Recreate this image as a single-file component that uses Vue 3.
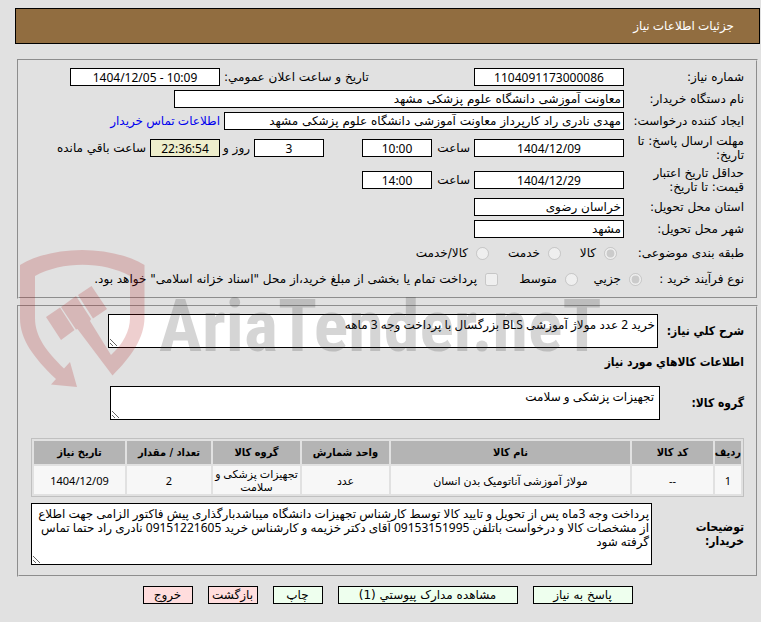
<script setup>
import { ref } from 'vue'

const remarks = ref('پرداخت وجه 3ماه پس از تحویل و تایید کالا توسط کارشناس تجهیزات دانشگاه میباشدبارگذاری پیش فاکتور الزامی جهت اطلاع از مشخصات کالا و درخواست باتلفن 09153151995 آقای دکتر خزیمه و کارشناس خرید 09151221605 نادری راد حتما تماس گرفته شود')
const summary = ref('خرید 2 عدد مولاژ آموزشی BLS بزرگسال با پرداخت وجه 3 ماهه')
const group = ref('تجهیزات پزشکی و سلامت')

const columns = [
  { title: 'ردیف', width: '26px' },
  { title: 'کد کالا', width: '81px' },
  { title: 'نام کالا', width: 'auto' },
  { title: 'واحد شمارش', width: '87px' },
  { title: 'گروه کالا', width: '87px' },
  { title: 'تعداد / مقدار', width: '84px' },
  { title: 'تاریخ نیاز', width: '91px' },
]
const items = [
  ['1', '--', 'مولاژ آموزشی آناتومیک بدن انسان', 'عدد', 'تجهیزات پزشکی و سلامت', '2', '1404/12/09'],
]
const actions = [
  { text: 'پاسخ به نیاز', kind: 'go', size: 'medium' },
  { text: 'مشاهده مدارک پیوستي (1)', kind: 'go', size: 'wide' },
  { text: 'چاپ', kind: 'go', size: 'small' },
  { text: 'بازگشت', kind: 'leave', size: 'small' },
  { text: 'خروج', kind: 'leave', size: 'small' },
]
</script>

<template>
  <main class="page" dir="rtl">
    <header class="title-bar">جزئیات اطلاعات نیاز</header>

    <div class="panels">
      <fieldset class="panel details">
        <div class="row">
          <label class="name" for="need-no">شماره نیاز:</label>
          <input id="need-no" class="box w150 num" value="1104091173000086" readonly>
          <span class="announce">
            <label for="announce">تاریخ و ساعت اعلان عمومي:</label>
            <input id="announce" class="box w150 num" dir="ltr" value="1404/12/05 - 10:09" readonly>
          </span>
        </div>
        <div class="row">
          <label class="name" for="org">نام دستگاه خریدار:</label>
          <input id="org" class="box w450" value="معاونت آموزشی دانشگاه علوم پزشکی مشهد" readonly>
        </div>
        <div class="row">
          <label class="name" for="creator">ایجاد کننده درخواست:</label>
          <input id="creator" class="box w400" value="مهدی نادری راد کارپرداز معاونت آموزشی دانشگاه علوم پزشکی مشهد" readonly>
          <a href="#contact">اطلاعات تماس خریدار</a>
        </div>
        <div class="row tall">
          <label class="name" for="deadline">مهلت ارسال پاسخ: تا تاریخ:</label>
          <input id="deadline" class="box w150 num" value="1404/12/09" readonly>
          <label class="hour" for="deadline-hour">ساعت</label>
          <input id="deadline-hour" class="box w70 num" value="10:00" readonly>
          <span class="remaining">
            <input id="days" class="box w70 num" value="3" readonly>
            <label class="days" for="days">روز و</label>
            <input id="clock" class="box w70 num timer" value="22:36:54" readonly>
            <label for="clock">ساعت باقي مانده</label>
          </span>
        </div>
        <div class="row tall">
          <label class="name" for="validity">حداقل تاریخ اعتبار قیمت: تا تاریخ:</label>
          <input id="validity" class="box w150 num" value="1404/12/29" readonly>
          <label class="hour" for="validity-hour">ساعت</label>
          <input id="validity-hour" class="box w70 num" value="14:00" readonly>
        </div>
        <div class="row">
          <label class="name" for="province">استان محل تحویل:</label>
          <input id="province" class="box w150" value="خراسان رضوی" readonly>
        </div>
        <div class="row">
          <label class="name" for="city">شهر محل تحویل:</label>
          <input id="city" class="box w150" value="مشهد" readonly>
        </div>
        <div class="row choice">
          <span class="name subject">طبقه بندی موضوعی:</span>
          <label class="option w52"><input type="radio" name="subject" checked disabled>کالا</label>
          <label class="option w68"><input type="radio" name="subject" disabled>خدمت</label>
          <label class="option"><input type="radio" name="subject" disabled>کالا/خدمت</label>
        </div>
        <div class="row choice">
          <span class="name process">نوع فرآیند خرید :</span>
          <label class="option w60"><input type="radio" name="process" checked disabled>جزیي</label>
          <label class="option w76"><input type="radio" name="process" disabled>متوسط</label>
          <label class="option"><input type="checkbox" disabled>پرداخت تمام یا بخشی از مبلغ خرید،از محل "اسناد خزانه اسلامی" خواهد بود.</label>
        </div>
      </fieldset>

      <fieldset class="panel goods">
        <div class="line">
          <label class="strong" for="summary">شرح کلي نیاز:</label>
          <textarea id="summary" v-model="summary" class="area short"></textarea>
        </div>
        <h2 class="heading">اطلاعات کالاهاي مورد نیاز</h2>
        <div class="line">
          <label class="strong" for="group">گروه کالا:</label>
          <textarea id="group" v-model="group" class="area short inset"></textarea>
        </div>
        <table class="items">
          <colgroup>
            <col v-for="c in columns" :key="c.title" :style="{ width: c.width }">
          </colgroup>
          <thead>
            <tr><th v-for="c in columns" :key="c.title">{{ c.title }}</th></tr>
          </thead>
          <tbody>
            <tr v-for="item in items" :key="item[0]">
              <td v-for="(cell, i) in item" :key="i">{{ cell }}</td>
            </tr>
          </tbody>
        </table>
        <div class="line">
          <label class="strong" for="remarks">توضیحات<br>خریدار:</label>
          <textarea id="remarks" v-model="remarks" class="area long"></textarea>
        </div>
      </fieldset>

      <div class="actions">
        <button v-for="a in actions" :key="a.text" type="button" :class="[a.kind, a.size]">{{ a.text }}</button>
      </div>
    </div>

    <svg class="watermark" width="590" height="150" viewBox="0 0 590 150" direction="ltr" aria-hidden="true">
      <path class="shield" d="M0 25 C33 5 91 5 124.500 25 V78 C124 98 112 116 92.500 135.500 L57.500 89 L56 89.500 L41 67 L56 56 L71 79 L70 81 L91 115 C103 104 110 91 110 78 V36 C83 21 42 21 15 36 V78 C15 97 27 112 44 128.500 L50 122 L57 147 L31 144.500 L36 139 C13 117 0 99 0 78 Z" />
      <path class="shield" d="M26 77 L40 67.500 L54.500 90 L41 100 Z M58 55 L71.500 46 L87 69 L73 78.500 Z" />
      <text x="139" y="111" class="brand">AriaTender.neT</text>
    </svg>
  </main>
</template>

<style>
body {
  background: #e1e1e1;
}
</style>

<style scoped>
.page {
  position: relative;
  box-sizing: border-box;
  padding: 8px 1px 16px 15px;
  color: #000;
  font: 12px/14px "DejaVu Sans", sans-serif;
}
.title-bar {
  padding: 10px 25px;
  border: 1px solid #000;
  background: #916d40;
  color: #fff;
  font-family: "Noto Sans", "DejaVu Sans", sans-serif;
  line-height: 14px;
}
.panels {
  padding: 15px 2px 0;
}
.panel {
  min-width: 0;
  margin: 0;
  border: 2px groove #e1e1e1;
}
.details {
  padding: 5px 12px;
}
.row {
  display: flex;
  align-items: center;
  gap: 4px;
  height: 22px;
  white-space: nowrap;
}
.row.tall {
  height: 32px;
}
.row.choice {
  height: 26px;
}
.name {
  flex: none;
  width: 116px;
}
.tall .name {
  white-space: normal;
}
.name.subject {
  width: 123px;
}
.name.process {
  width: 98px;
}
.box {
  box-sizing: border-box;
  flex: none;
  height: 18px;
  margin: 0;
  padding: 0 2px;
  border: 1px solid #000;
  border-radius: 0;
  background: #fff;
  color: #000;
  font: inherit;
}
.num {
  font-family: "Noto Sans", "DejaVu Sans", sans-serif;
  line-height: 14px;
  text-align: center;
}
.w52 { width: 52px; }
.w60 { width: 60px; }
.w68 { width: 68px; }
.w70 { width: 70px; }
.w76 { width: 76px; }
.w150 { width: 150px; }
.w400 { width: 400px; }
.w450 { width: 450px; }
.hour {
  width: 34px;
}
.days {
  width: 26px;
}
.timer {
  background: #eeeecc;
}
.announce,
.remaining {
  display: flex;
  align-items: center;
  gap: 4px;
}
.announce {
  justify-content: flex-end;
  width: 400px;
}
.remaining {
  margin-right: 34px;
}
a {
  color: #0000ee;
  font-family: "Noto Sans", "DejaVu Sans", sans-serif;
  text-decoration: none;
}
.option {
  display: flex;
  flex: none;
  align-items: center;
  gap: 8px;
}
.option input {
  flex: none;
  width: 13px;
  height: 13px;
  margin: 0;
}
.goods {
  margin-top: 6px;
  padding: 7px 12px 10px;
}
.line {
  display: flex;
  align-items: center;
}
.strong,
.heading,
.items th {
  font-family: "DejaVu Sans Condensed", "DejaVu Sans", sans-serif;
  font-weight: bold;
}
.strong {
  flex: 1;
}
.heading {
  margin: 7px 0 17px;
  font-size: 12px;
  line-height: 14px;
}
.area {
  box-sizing: border-box;
  flex: none;
  margin: 0;
  padding: 3px 2px;
  border: 1px solid #000;
  background: #fff;
  color: #000;
  font: 12px/14px "Noto Sans", "DejaVu Sans", sans-serif;
}
.short {
  width: 550px;
  height: 34px;
  margin-left: 77px;
}
.inset {
  margin-left: 79px;
  padding: 3px 5px;
}
.long {
  width: 621px;
  height: 62px;
}
.items {
  width: 100%;
  margin: 18px 0 6px;
  border: 1px solid #c0c0c0;
  border-spacing: 2px;
  table-layout: fixed;
  font: 11px/13px "Noto Sans", "DejaVu Sans", sans-serif;
  text-align: center;
}
.items th {
  height: 23px;
  padding: 0;
  background: #b4b4b4;
}
.items td {
  height: 28px;
  padding: 0;
  background: #f7f7f7;
}
.actions {
  display: flex;
  justify-content: center;
  gap: 15px;
  margin-top: 9px;
}
.actions button {
  height: 18px;
  padding: 0;
  border: 1px solid #000;
  color: #000;
  font: inherit;
}
.actions .go { background: #eeffee; }
.actions .leave { background: #ffdddd; }
.small { width: 50px; }
.medium { width: 100px; }
.wide { width: 180px; }
.watermark {
  position: absolute;
  top: 240px;
  left: 20px;
  opacity: 0.2;
  pointer-events: none;
}
.shield {
  fill: #af1414;
}
.brand {
  fill: #323232;
  font: bold 72px "Roboto Condensed", "Open Sans Condensed", "Noto Sans ExtraCondensed", "Noto Sans Condensed", "Liberation Sans", sans-serif;
}
</style>
